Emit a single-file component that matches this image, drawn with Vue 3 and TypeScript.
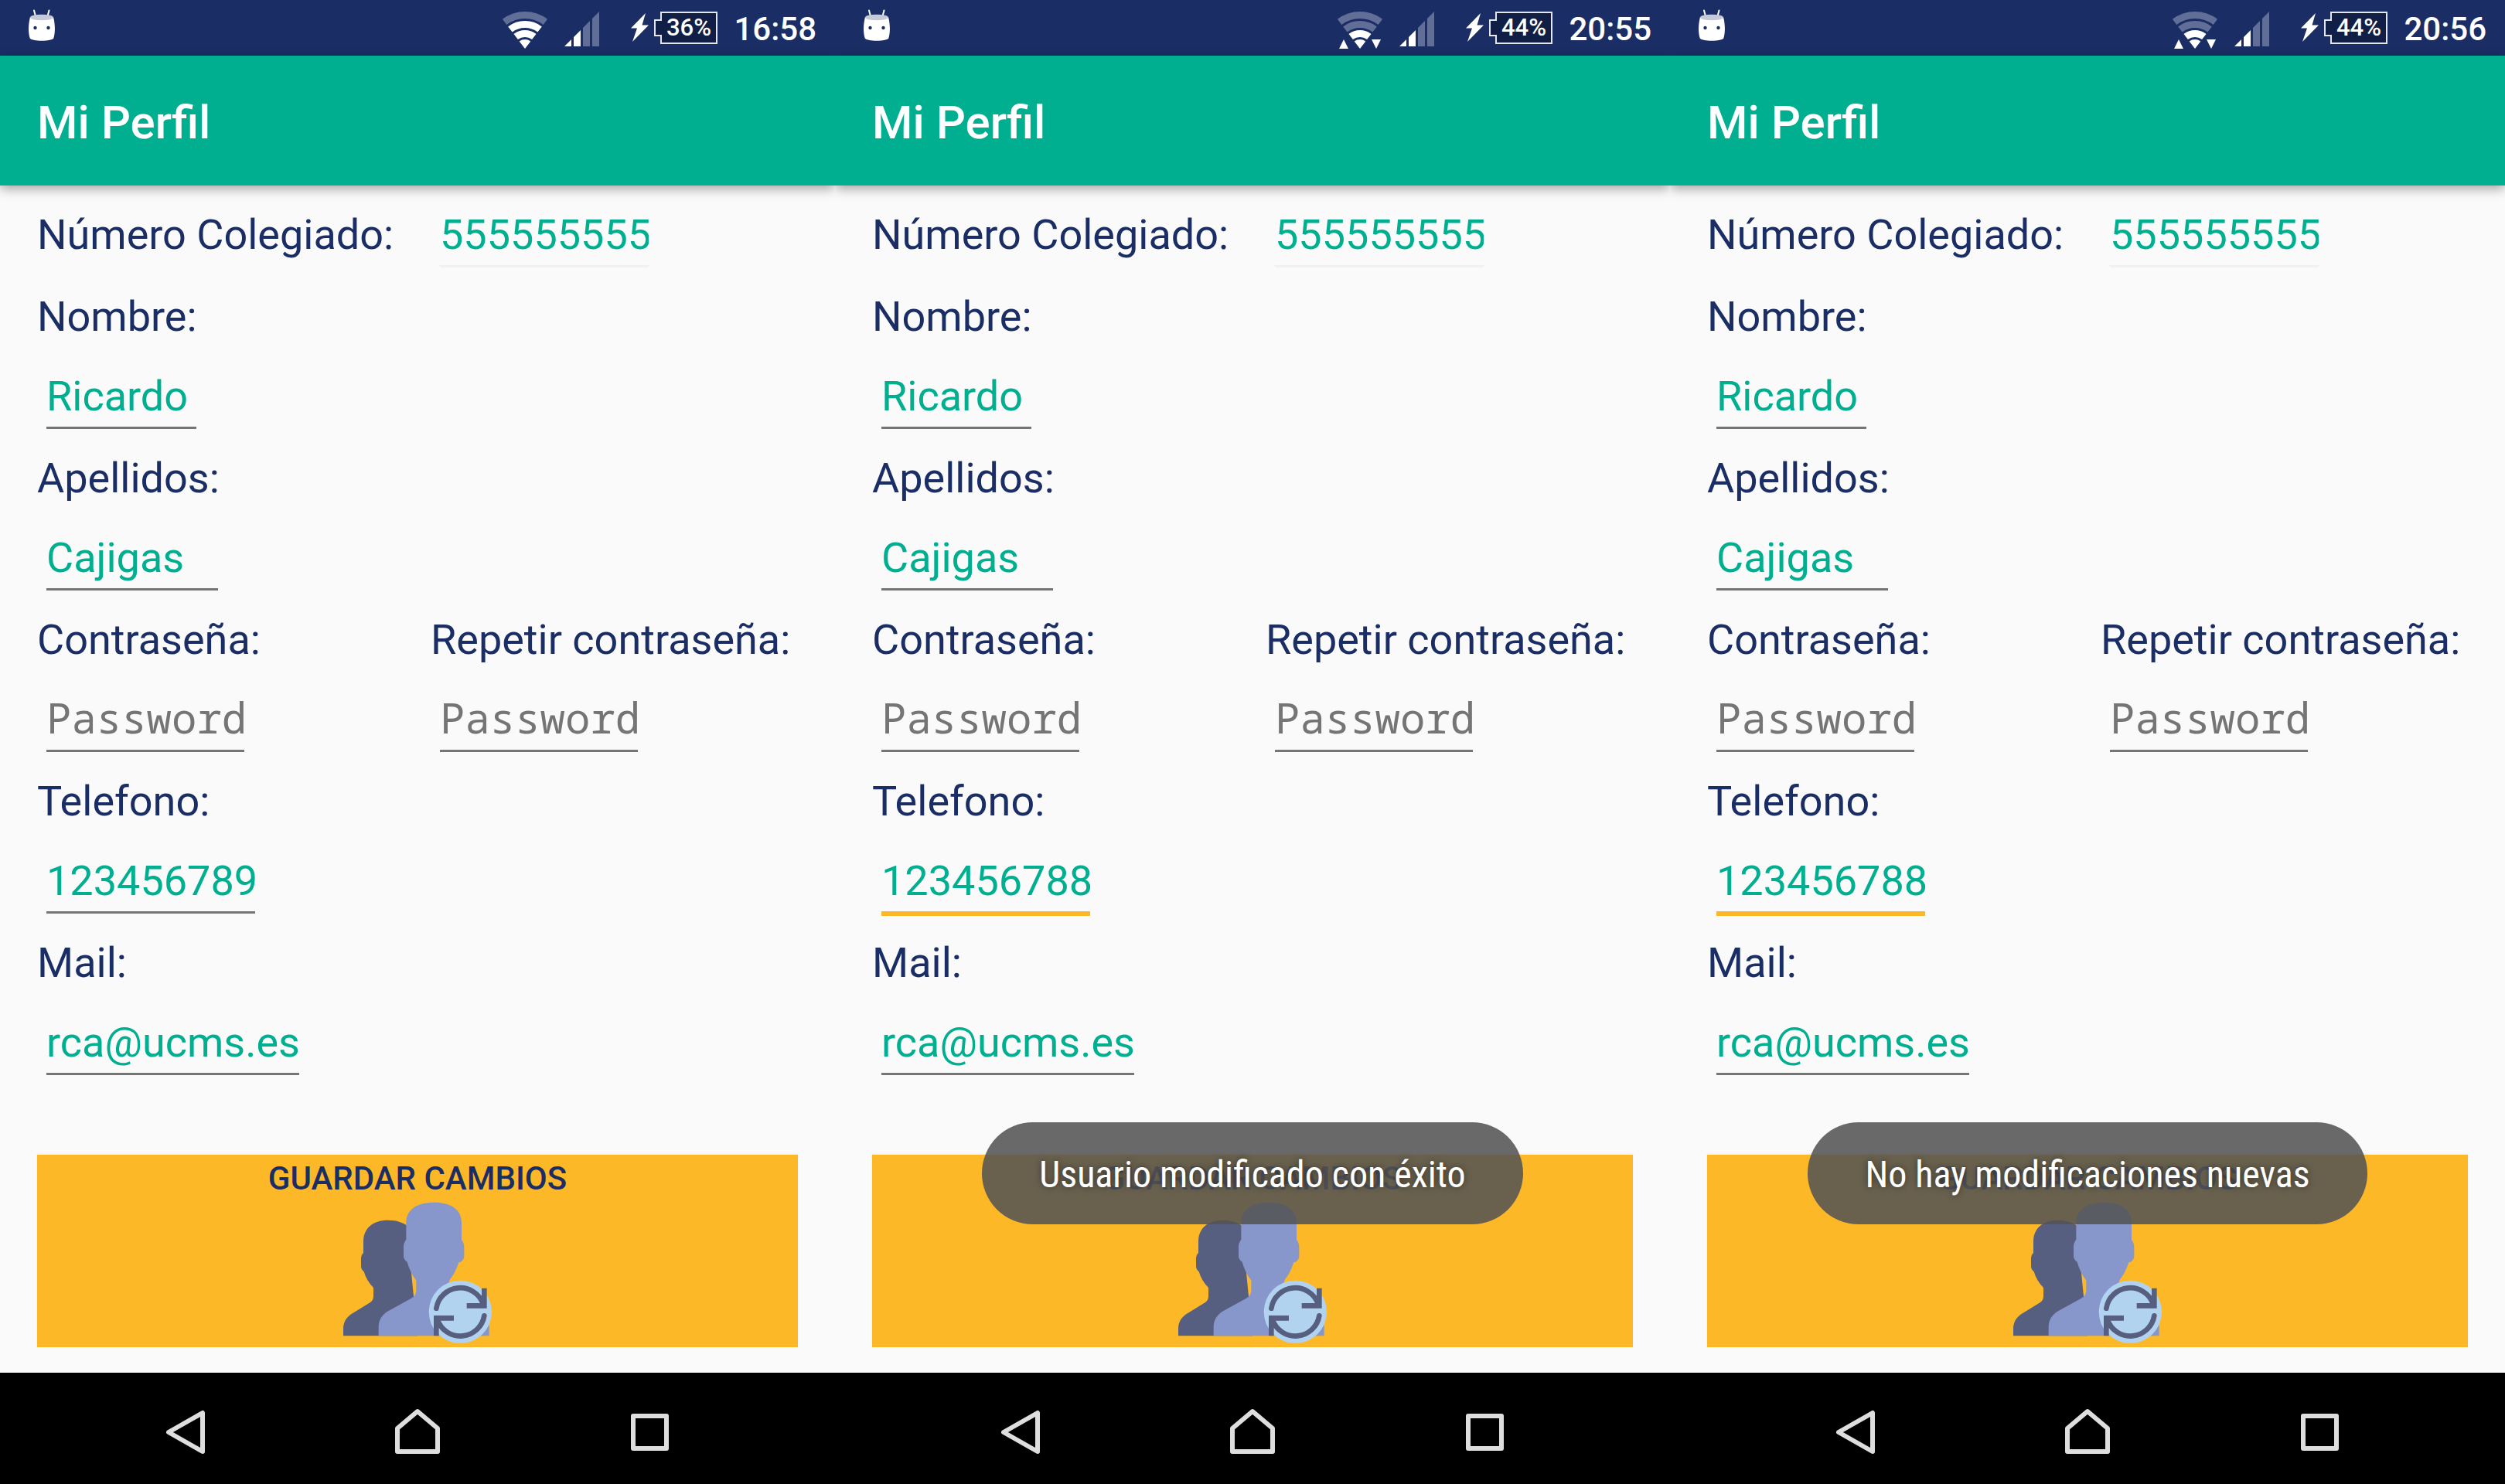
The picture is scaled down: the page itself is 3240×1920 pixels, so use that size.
<script setup lang="ts">
interface Field {
  id: string
  label: string
  type: 'text' | 'password' | 'tel' | 'email'
  value: string
  width: number
  disabled?: boolean
  active?: boolean
}

interface Screen {
  id: string
  wifi: number
  traffic: boolean
  battery: string
  time: string
  phone: string
  phoneActive: boolean
  toast: string
}

const screens: Screen[] = [
  { id: 'perfil', wifi: 3, traffic: false, battery: '36%', time: '16:58', phone: '123456789', phoneActive: false, toast: '' },
  { id: 'guardado', wifi: 2, traffic: true, battery: '44%', time: '20:55', phone: '123456788', phoneActive: true, toast: 'Usuario modificado con éxito' },
  { id: 'sin-cambios', wifi: 2, traffic: true, battery: '44%', time: '20:56', phone: '123456788', phoneActive: true, toast: 'No hay modificaciones nuevas' },
]

const wifiArcs = [
  { level: 4, d: 'M2.6 13.4A43.5 43.5 0 0 1 55.4 13.4' },
  { level: 3, d: 'M9.9 23A31.5 31.5 0 0 1 48.1 23' },
  { level: 2, d: 'M17.2 32.5A19.5 19.5 0 0 1 40.8 32.5' },
]

function fieldRows(s: Screen): Field[][] {
  return [
    [{ id: 'nombre', label: 'Nombre:', type: 'text', value: 'Ricardo', width: 194 }],
    [{ id: 'apellidos', label: 'Apellidos:', type: 'text', value: 'Cajigas', width: 222 }],
    [
      { id: 'clave', label: 'Contraseña:', type: 'password', value: '', width: 256 },
      { id: 'clave2', label: 'Repetir contraseña:', type: 'password', value: '', width: 256 },
    ],
    [{ id: 'telefono', label: 'Telefono:', type: 'tel', value: s.phone, width: 270, active: s.phoneActive }],
    [{ id: 'mail', label: 'Mail:', type: 'email', value: 'rca@ucms.es', width: 327 }],
  ]
}
</script>

<template>
  <div class="board">
    <section v-for="s in screens" :key="s.id" class="phone">
      <div class="status">
        <svg class="droid" width="36" height="48" viewBox="0 0 36 48" aria-hidden="true">
          <path d="M8 -1.500L10 6M27.500 -1.500L25.500 6" stroke="#fff" stroke-width="2" stroke-linecap="round" />
          <path d="M3 7C8 11 28 11 33 7C35 15 36 25 33.500 34C32 39 4 39 2.500 34C0 25 1 15 3 7Z" fill="#fff" />
          <ellipse cx="18" cy="7.500" rx="15" ry="3.800" fill="#c5c9d8" />
          <circle cx="9.500" cy="21" r="2.200" fill="#1a2d65" />
          <circle cx="26.500" cy="21" r="2.200" fill="#1a2d65" />
        </svg>
        <svg class="wifi" width="58" height="48" viewBox="0 0 58 48" aria-hidden="true">
          <path
            v-for="arc in wifiArcs"
            :key="arc.level"
            :d="arc.d"
            fill="none"
            :stroke="arc.level <= s.wifi ? '#fff' : '#616e97'"
            stroke-width="9"
          />
          <path d="M29 48L21.700 38.500A12 12 0 0 1 36.300 38.500Z" fill="#fff" />
          <path v-if="s.traffic" d="M8 36L14 48H2ZM44 36H56L50 48Z" fill="#fff" />
        </svg>
        <svg class="signal" width="45" height="48" viewBox="0 0 45 48" aria-hidden="true">
          <path d="M0 45L9 36V45ZM12 45V33L21 24V45Z" fill="#fff" />
          <path d="M24 45V21L33 12V45ZM36 45V9L45 0V45Z" fill="#616e97" />
        </svg>
        <svg class="bolt" width="23" height="48" viewBox="0 0 23 48" aria-hidden="true">
          <path d="M19 2L14.500 17.500H23L2 39L8 21.500H0Z" fill="#fff" />
        </svg>
        <svg class="battery" width="82" height="48" viewBox="0 0 82 48" role="img" :aria-label="s.battery">
          <path d="M1 11H9V1H81V41H9V31H1Z" fill="#111f46" stroke="#e4e6ee" stroke-width="2" />
          <text x="45" y="31" text-anchor="middle">{{ s.battery }}</text>
        </svg>
        <time class="clock">{{ s.time }}</time>
      </div>

      <header class="appbar"><h1>Mi Perfil</h1></header>

      <main class="content">
        <form class="form" @submit.prevent>
          <div class="row">
            <label class="cell side" :for="`${s.id}-numero`">Número Colegiado:</label>
            <div class="cell">
              <div class="control">
                <input :id="`${s.id}-numero`" class="input" type="text" value="555555555" disabled :style="{ width: '270px' }" />
              </div>
            </div>
          </div>
          <div v-for="(row, i) in fieldRows(s)" :key="i" class="row">
            <div v-for="f in row" :key="f.id" class="cell">
              <label class="label" :for="`${s.id}-${f.id}`">{{ f.label }}</label>
              <div class="control">
                <input
                  :id="`${s.id}-${f.id}`"
                  class="input"
                  :class="{ active: f.active }"
                  :type="f.type"
                  :value="f.value"
                  :placeholder="f.type === 'password' ? 'Password' : undefined"
                  :style="{ width: f.width + 'px' }"
                />
              </div>
            </div>
          </div>
          <button class="save" type="submit">
            <span>GUARDAR CAMBIOS</span>
            <svg width="192" height="192" viewBox="132 213 576 576" aria-hidden="true">
              <path
                d="M132 745V718C132 690 145 670 170 656L232 618C244 611 249 603 249 590V558C232 541 219 520 212 496C205 490 201 483 201 474V446C201 436 204 429 210 423V380C210 327 246 296 305 296C336 296 358 303 378 316L420 745Z"
                fill="#565f80"
              />
              <path
                d="M269 745V712C269 682 284 662 306 649L396 599C409 591 415 583 415 566V530C398 508 386 482 380 458C371 452 366 444 366 434V402C366 390 369 380 376 372V306C376 256 416 227 484 227C552 227 591 256 591 306V372C598 380 601 390 601 402V434C601 448 592 458 580 460C572 486 560 510 543 530V566C543 583 550 591 563 599L661 649C683 662 698 682 698 712V745Z"
                fill="#8797cb"
              />
              <circle cx="586" cy="652" r="122" fill="#b2d3ef" />
              <g fill="none" stroke="#565f80" stroke-width="20">
                <path d="M493 638A94 94 0 0 1 674 620M679 667A94 94 0 0 1 498 684" stroke-linecap="round" />
                <path d="M679 560V628H611M493 745V676H561" />
              </g>
            </svg>
          </button>
        </form>
        <div v-if="s.toast" class="toast-layer">
          <p class="toast" role="status">{{ s.toast }}</p>
        </div>
      </main>

      <nav class="navbar">
        <button type="button" aria-label="Atrás">
          <svg width="72" height="72" viewBox="0 0 72 72"><path d="M58 16V66L14 41Z" /></svg>
        </button>
        <button type="button" aria-label="Inicio">
          <svg width="72" height="72" viewBox="0 0 72 72"><path d="M10 66V36L36 14L62 36V66Z" /></svg>
        </button>
        <button type="button" aria-label="Recientes">
          <svg width="72" height="72" viewBox="0 0 72 72"><path d="M15 20H58V62H15Z" /></svg>
        </button>
      </nav>
    </section>
  </div>
</template>

<style>
body {
  margin: 0;
  background: #fafafa;
}
</style>

<style scoped>
.board {
  display: grid;
  grid-template-columns: repeat(3, 1fr);
  min-height: 100vh;
  font-family: Roboto, 'Liberation Sans', sans-serif;
}

.phone {
  display: flex;
  flex-direction: column;
  min-width: 0;
  overflow: hidden;
  background: #fafafa;
}

.status {
  display: flex;
  align-items: flex-start;
  box-sizing: border-box;
  height: 72px;
  padding: 15px 24px 0 36px;
  background: #1a2d65;
  color: #fff;
}

.status svg {
  flex: none;
  overflow: visible;
}

.wifi {
  margin-left: auto;
}

.signal {
  margin-left: 22px;
}

.bolt {
  margin-left: 41px;
}

.battery {
  margin-left: 7px;
}

.battery text {
  fill: #fff;
  font-size: 31px;
  font-weight: 500;
}

.clock {
  margin-left: 21px;
  font-size: 42px;
  font-weight: 500;
  line-height: 46px;
}

.appbar {
  position: relative;
  z-index: 1;
  padding: 51px 48px 45px;
  background: #00ae90;
  box-shadow: 0 4px 14px rgba(0, 0, 0, 0.36);
}

.appbar h1 {
  margin: 0;
  color: #fff;
  font-size: 60px;
  font-weight: 500;
  line-height: 72px;
}

.content {
  position: relative;
  flex: 1;
  padding: 0 48px 33px;
}

.form {
  display: flex;
  flex-direction: column;
}

.row {
  display: flex;
}

.cell {
  flex: none;
  width: 509px;
}

.cell:nth-child(2) {
  width: auto;
}

.side,
.label {
  color: #1a2d65;
  font-size: 54px;
  line-height: 72px;
  white-space: nowrap;
}

.side {
  padding-top: 28px;
}

.label {
  display: block;
  padding-bottom: 3px;
}

.control {
  box-sizing: border-box;
  height: 134px;
  padding: 28px 12px 0;
}

.input {
  display: block;
  box-sizing: content-box;
  height: 72px;
  margin: 0;
  padding: 0 0 3px;
  border: 0;
  border-bottom: 3px solid #757575;
  border-radius: 0;
  outline: 0;
  background: none;
  color: #00ae90;
  font-family: inherit;
  font-size: 54px;
  line-height: 72px;
}

.input:disabled {
  border-bottom-color: #f1f1f1;
}

.input.active {
  border-bottom: 6px solid #fdb827;
}

.input[type='password'] {
  height: 66px;
  padding-bottom: 9px;
  font-family: 'Droid Sans Mono', 'Noto Sans Mono', 'DejaVu Sans Mono', monospace;
  line-height: 66px;
}

.input::placeholder {
  color: #757575;
  opacity: 1;
}

.save {
  display: flex;
  flex-direction: column;
  align-items: center;
  margin: 75px 0 0;
  padding: 4px 0 0;
  border: 0;
  background: #fdb827;
  box-shadow: 0 -1px 2px rgba(0, 0, 0, 0.06);
  color: #1a2d65;
  font-family: inherit;
  font-size: 42px;
  font-weight: 500;
  line-height: 53px;
}

.save svg {
  display: block;
}

.toast-layer {
  position: absolute;
  right: 0;
  bottom: 192px;
  left: 0;
  display: flex;
  justify-content: center;
}

.toast {
  margin: 0;
  padding: 39px 74px 35px;
  border-radius: 66px;
  background: rgba(84, 84, 84, 0.88);
  color: #fff;
  font-family: 'Roboto Condensed', 'Liberation Sans Narrow', Roboto, sans-serif;
  font-size: 48px;
  line-height: 58px;
  text-shadow: 0 0 8px rgba(0, 0, 0, 0.5);
  white-space: nowrap;
}

.navbar {
  display: flex;
  justify-content: center;
  height: 144px;
  background: #000;
}

.navbar button {
  display: flex;
  align-items: center;
  justify-content: center;
  width: 300px;
  padding: 0;
  border: 0;
  background: none;
}

.navbar path {
  fill: none;
  stroke: #dedede;
  stroke-width: 6;
  stroke-linejoin: round;
}
</style>
